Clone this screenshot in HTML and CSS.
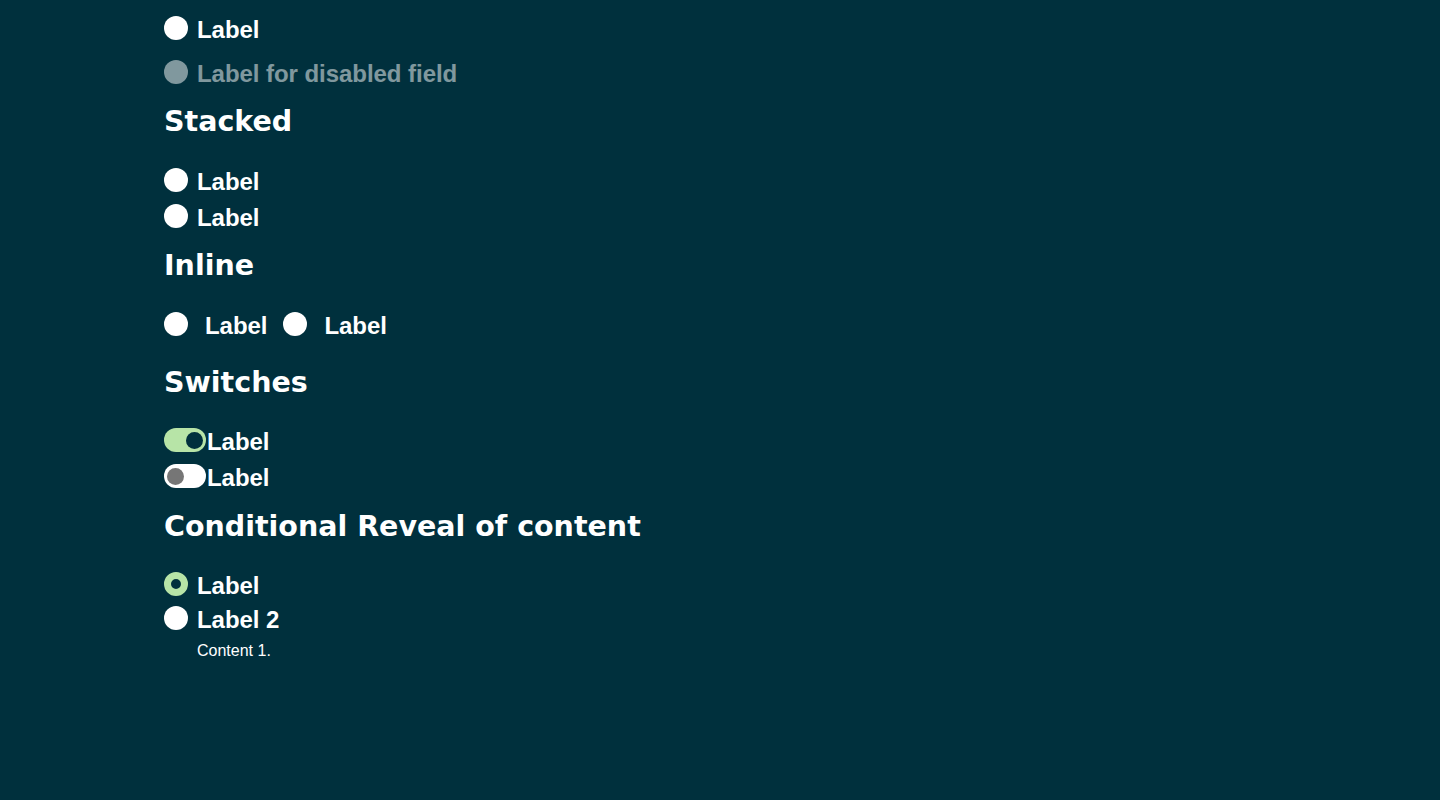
FILE: index.html
```html
<!DOCTYPE html>
<html lang="en">
<head>
<meta charset="utf-8">
<title>Radios</title>
<link rel="stylesheet" href="styles.css">
</head>
<body>
<main class="page">
  <div class="row row-first">
    <span class="radio"></span><span class="label">Label</span>
  </div>
  <div class="row disabled">
    <span class="radio"></span><span class="label">Label for disabled field</span>
  </div>

  <h2 class="heading h-stacked">Stacked</h2>
  <div class="row">
    <span class="radio"></span><span class="label">Label</span>
  </div>
  <div class="row row-tight">
    <span class="radio"></span><span class="label">Label</span>
  </div>

  <h2 class="heading h-inline">Inline</h2>
  <div class="inline-group">
    <div class="row inline-item">
      <span class="radio"></span><span class="label">Label</span>
    </div>
    <div class="row inline-item">
      <span class="radio"></span><span class="label">Label</span>
    </div>
  </div>

  <h2 class="heading h-switches">Switches</h2>
  <div class="row switch-row">
    <span class="switch on"><span class="knob"></span></span><span class="label">Label</span>
  </div>
  <div class="row switch-row row-tight">
    <span class="switch off"><span class="knob"></span></span><span class="label">Label</span>
  </div>

  <h2 class="heading h-cond">Conditional Reveal of content</h2>
  <div class="row">
    <span class="radio checked"></span><span class="label">Label</span>
  </div>
  <div class="row row-tighter">
    <span class="radio"></span><span class="label">Label 2</span>
  </div>
  <p class="content">Content 1.</p>
</main>
</body>
</html>
```

FILE: styles.css
```css
html, body {
  margin: 0;
  padding: 0;
  background: #00303d;
  color: #ffffff;
}
body {
  font-family: "Liberation Sans", Arial, sans-serif;
  height: 800px;
  overflow: hidden;
}
.page {
  display: flex;
  flex-direction: column;
  align-items: flex-start;
  padding: 16px 0 0 164px;
}
.row {
  display: flex;
  align-items: center;
  height: 24px;
  margin-top: 30px;
}
.row-first { margin-top: 0; }
.disabled { margin-top: 20px; opacity: 0.5; }
.row-tight { margin-top: 12px; }
.row-tighter { margin-top: 9px; }
.radio {
  width: 24px;
  height: 24px;
  border-radius: 50%;
  background: #ffffff;
  flex: none;
  box-sizing: border-box;
}
.radio.checked {
  background: #00303d;
  border: 7px solid #b7e4a7;
}
.label {
  font-weight: 700;
  font-size: 24px;
  line-height: 24px;
  margin-left: 9px;
  padding-top: 3px;
  letter-spacing: -0.05px;
}
.heading {
  font-family: "DejaVu Sans", "Open Sans", sans-serif;
  font-weight: 700;
  font-size: 28.5px;
  line-height: 36px;
  margin: 20px 0 0 0;
}
.h-stacked + .row { margin-top: 28px; }
.h-inline { margin-top: 20px; }
.h-switches { margin-top: 29px; }
.h-cond { margin-top: 21px; }
.inline-group {
  display: flex;
  gap: 16px;
  margin-top: 28px;
}
.inline-group .row { margin-top: 0; }
.inline-item .label { margin-left: 17px; }
.switch-row .label { margin-left: 1px; }
.switch {
  width: 42px;
  height: 24px;
  border-radius: 12px;
  display: flex;
  align-items: center;
  box-sizing: border-box;
  padding: 0 3px;
  flex: none;
}
.switch .knob {
  width: 17px;
  height: 17px;
  border-radius: 50%;
}
.switch.on {
  background: #b7e4a7;
  justify-content: flex-end;
}
.switch.on .knob { background: #00303d; }
.switch.off {
  background: #ffffff;
  justify-content: flex-start;
}
.switch.off .knob { background: #767676; }
.switch-row { margin-top: 27px; }
.switch-row.row-tight { margin-top: 12px; }
.h-cond + .row { margin-top: 27px; }
.row-tighter { margin-top: 10px; }
.content {
  margin: 11px 0 0 33px;
  font-size: 16px;
  line-height: 20px;
}
```
